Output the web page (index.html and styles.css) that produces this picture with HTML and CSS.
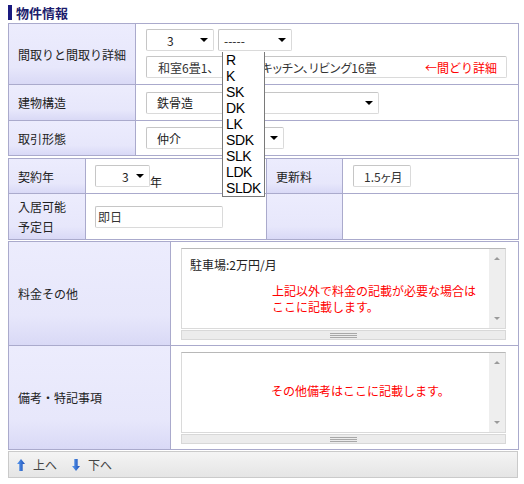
FILE: index.html
```html
<!DOCTYPE html>
<html lang="ja">
<head>
<meta charset="utf-8">
<title>物件情報</title>
<link rel="stylesheet" href="styles.css">
</head>
<body>
<div class="page">
  <h2 class="ttl">物件情報</h2>

  <div class="tbl t1">
    <div class="th">間取りと間取り詳細</div>
    <div class="td td-madori">
      <div class="selrow">
        <div class="sel s-num"><span>3</span><i class="arw"></i></div>
        <div class="sel s-type"><span>-----</span><i class="arw"></i>
          <ul class="dd">
            <li>R</li><li>K</li><li>SK</li><li>DK</li><li>LK</li><li>SDK</li><li>SLK</li><li>LDK</li><li>SLDK</li>
          </ul>
        </div>
      </div>
      <div class="inp inp-wide"><span class="pal">和室6畳1、</span><span class="hid"></span><span class="pal">キッチン、リビング16畳</span><span class="note">←間どり詳細</span></div>
    </div>
    <div class="th">建物構造</div>
    <div class="td"><div class="sel s-kozo"><span>鉄骨造</span><i class="arw"></i></div></div>
    <div class="th">取引形態</div>
    <div class="td"><div class="sel s-tori"><span>仲介</span><i class="arw"></i></div></div>
  </div>

  <div class="tbl t2">
    <div class="th">契約年</div>
    <div class="td td-c2 br"><div class="sel s-year"><span>3</span><i class="arw"></i></div><span class="unit">年</span></div>
    <div class="th">更新料</div>
    <div class="td"><div class="inp inp-fee pal">1.5ヶ月</div></div>
    <div class="th th-2line">入居可能<br>予定日</div>
    <div class="td td-c2 br"><div class="inp inp-date">即日</div></div>
    <div class="th"></div>
    <div class="td"></div>
  </div>

  <div class="tbl t3">
    <div class="th">料金その他</div>
    <div class="td td-ta">
      <div class="ta">
        <div class="ta-body">
          <div class="ta-text"><div class="ta-line">駐車場:2万円/月</div><div class="red red1"><div>上記以外で料金の記載が必要な場合は</div><div>ここに記載します。</div></div></div>
          <div class="ta-scroll"><i class="sc-up"></i><i class="sc-dn"></i></div>
        </div>
        <div class="ta-grip"><span></span></div>
      </div>
    </div>
    <div class="th">備考・特記事項</div>
    <div class="td td-ta">
      <div class="ta">
        <div class="ta-body">
          <div class="ta-text ta-text2"><div class="red">その他備考はここに記載します。</div></div>
          <div class="ta-scroll"><i class="sc-up"></i><i class="sc-dn"></i></div>
        </div>
        <div class="ta-grip"><span></span></div>
      </div>
    </div>
  </div>

  <div class="foot">
    <svg class="ico" width="8" height="12" viewBox="0 0 8 12"><defs><linearGradient id="gu" x1="0" x2="1" y1="0" y2="0"><stop offset="0" stop-color="#5c9cf0"/><stop offset="1" stop-color="#1a4fb8"/></linearGradient></defs><polygon points="4,0 8,5 5.7,5 5.7,12 2.3,12 2.3,5 0,5" fill="url(#gu)"/></svg>
    <span class="flink">上へ</span>
    <svg class="ico ico-dn" width="8" height="12" viewBox="0 0 8 12"><defs><linearGradient id="gd" x1="0" x2="1" y1="0" y2="0"><stop offset="0" stop-color="#5c9cf0"/><stop offset="1" stop-color="#1a4fb8"/></linearGradient></defs><polygon points="4,12 8,7 5.7,7 5.7,0 2.3,0 2.3,7 0,7" fill="url(#gd)"/></svg>
    <span class="flink">下へ</span>
  </div>
</div>
</body>
</html>
```

FILE: styles.css
```css
body {
  margin: 0;
  background: #fff;
  color: #222;
  font-family: "Noto Sans CJK JP", "Noto Sans", sans-serif;
  font-size: 12px;
}

.page {
  padding: 5px 0 0 8px;
  width: 511px;
}

.ttl {
  margin: 0 0 3px;
  height: 15px;
  line-height: 15px;
  font-size: 13px;
  font-weight: bold;
  color: #1c1c6c;
  border-left: 4px solid #1a1a80;
  padding-left: 4px;
}

.tbl {
  display: grid;
  width: 511px;
  box-sizing: border-box;
  border: 1px solid #aaaacc;
  border-bottom: none;
}

.t1 {
  grid-template-columns: 127px 1fr;
  grid-template-rows: 61px 36px 35px;
}

.t2 {
  margin-top: 2px;
  grid-template-columns: 77px 181px 76px 1fr;
  grid-template-rows: 35px 46px;
}

.t3 {
  margin-top: 1px;
  grid-template-columns: 162px 1fr;
  grid-template-rows: 104px 104px;
}

.th,
.td {
  box-sizing: border-box;
  border-bottom: 1px solid #aaaacc;
  display: flex;
  align-items: center;
}

.th {
  background: linear-gradient(#ececfd 0%, #e7e7fb 72%, #d9d9f6 100%);
  border-right: 1px solid #aaaacc;
  padding-left: 9px;
  color: #222;
}

.th-2line {
  line-height: 20px;
}

.td {
  padding-left: 10px;
  background: #fff;
}

.td.br {
  border-right: 1px solid #aaaacc;
}

.td-c2 {
  padding-left: 9px;
}

.td-madori {
  flex-direction: column;
  align-items: flex-start;
  padding-top: 5px;
}

.selrow {
  display: flex;
  gap: 4px;
  margin-bottom: 5px;
}

.sel {
  position: relative;
  box-sizing: border-box;
  height: 22px;
  display: flex;
  align-items: center;
  background: #fff;
  border: 1px solid;
  border-color: #c6c6c6 #dadada #dadada #c6c6c6;
  border-radius: 2px;
  padding-left: 10px;
  color: #222;
}

.arw {
  position: absolute;
  right: 5px;
  top: 50%;
  margin-top: -2px;
  width: 0;
  height: 0;
  border-top: 4px solid #000;
  border-left: 4px solid transparent;
  border-right: 4px solid transparent;
}

.s-num { width: 68px; padding-left: 20px; }
.s-type { width: 74px; padding-left: 5px; }
.s-kozo { width: 233px; }
.s-tori { width: 138px; }
.s-year { width: 55px; padding-left: 26px; }

.dd {
  position: absolute;
  left: 3px;
  top: 22px;
  z-index: 10;
  width: 43px;
  box-sizing: border-box;
  margin: 0;
  padding: 0;
  list-style: none;
  background: #fff;
  border: 1px solid #7a7a7a;
  border-top: none;
  font-family: "Liberation Sans", Arial, sans-serif;
  font-size: 14px;
  line-height: 16px;
  letter-spacing: -0.4px;
  color: #000;
}

.dd li {
  padding-left: 3px;
  height: 16px;
}

.inp {
  box-sizing: border-box;
  height: 22px;
  display: flex;
  align-items: center;
  background: #fff;
  border: 1px solid;
  border-color: #c6c6c6 #dadada #dadada #c6c6c6;
  border-radius: 2px;
  padding-left: 10px;
  color: #333;
}

.pal {
  font-feature-settings: "palt" 1;
}

.inp-wide {
  width: 361px;
  padding-left: 11px;
  padding-right: 9px;
}

.hid {
  width: 48px;
  flex: none;
}

.note {
  margin-left: auto;
}

.note,
.red {
  color: #ff0000;
}

.inp-fee { width: 58px; }
.inp-date { width: 128px; padding-left: 2px; }

.unit {
  align-self: flex-end;
  margin-bottom: 4px;
  line-height: 14px;
}

.td-ta {
  align-items: flex-start;
  padding-top: 6px;
}

.ta {
  width: 325px;
}

.ta-body {
  box-sizing: border-box;
  height: 81px;
  display: flex;
  border: 1px solid #dadada;
  border-top-color: #b8b8b8;
  background: #fff;
}

.ta-text {
  flex: 1;
  padding: 8px 0 0 8px;
  line-height: 15px;
  color: #222;
}

.red1 {
  margin: 11px 0 0 82px;
  line-height: 16px;
}

.ta-text2 {
  padding: 30px 0 0 89px;
}

.ta-scroll {
  position: relative;
  width: 16px;
  background: #eeeeee;
}

.sc-up,
.sc-dn {
  position: absolute;
  left: 5px;
  width: 0;
  height: 0;
  border-left: 3px solid transparent;
  border-right: 3px solid transparent;
}

.sc-up {
  top: 8px;
  border-bottom: 3px solid #9a9a9a;
}

.sc-dn {
  bottom: 8px;
  border-top: 3px solid #9a9a9a;
}

.ta-grip {
  box-sizing: border-box;
  margin-top: 1px;
  height: 10px;
  border: 1px solid #d8d8d8;
  background: #ececec;
  display: flex;
  justify-content: center;
  align-items: center;
}

.ta-grip span {
  width: 27px;
  height: 5px;
  background: repeating-linear-gradient(#a8a8a8 0 1px, transparent 1px 2px);
}

.foot {
  box-sizing: border-box;
  margin-top: 1px;
  width: 510px;
  height: 27px;
  display: flex;
  align-items: center;
  padding-left: 8px;
  border: 1px solid #cacaca;
  background: linear-gradient(#f4f4f4, #e5e5e5);
}

.ico {
  display: block;
}

.ico-dn {
  margin-left: 15px;
}

.flink {
  margin-left: 8px;
  color: #444;
}
```
